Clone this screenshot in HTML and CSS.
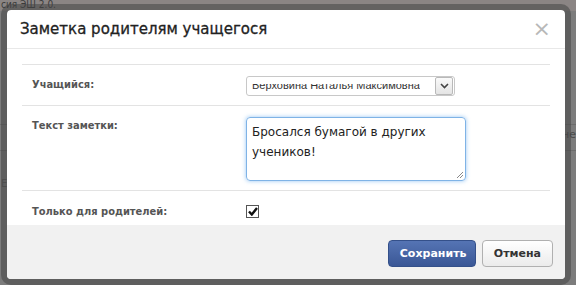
FILE: index.html
```html
<!DOCTYPE html>
<html lang="ru">
  <head>
    <meta charset="UTF-8" />
    <meta name="viewport" content="width=device-width, initial-scale=1.0" />
    <title>Заметка родителям учащегося</title>
    <link rel="stylesheet" href="styles.css">
  </head>
  <body>
    <div class="backdrop">
      <div class="page-top">сия ЭШ 2.0.</div>
      <div class="page-line line-a"></div>
      <div class="page-line line-b"></div>
      <div class="page-side">Е</div>
      <div class="page-side-right">не</div>
    </div>

    <div class="modal">
      <div class="modal-header">
        <h3>Заметка родителям учащегося</h3>
        <span class="close">&times;</span>
      </div>

      <div class="modal-body">
        <div class="form-row">
          <label class="row-label">Учащийся:</label>
          <div class="row-control">
            <div class="select">
              <span class="select-text"><span>Верховина Наталья Максимовна</span></span>
              <span class="select-arrow">
                <svg width="9" height="6" viewBox="0 0 9 6"><path d="M1 1 L4.5 4.5 L8 1" fill="none" stroke="#444" stroke-width="1.6"/></svg>
              </span>
            </div>
          </div>
        </div>

        <div class="form-row">
          <label class="row-label">Текст заметки:</label>
          <div class="row-control">
            <div class="textarea">Бросался бумагой в других учеников!
              <svg class="grip" width="8" height="8" viewBox="0 0 8 8"><path d="M7 1 L1 7 M7 4 L4 7" stroke="#888" stroke-width="1"/></svg>
            </div>
          </div>
        </div>

        <div class="form-row last">
          <label class="row-label">Только для родителей:</label>
          <div class="row-control">
            <span class="checkbox">
              <svg width="10" height="9" viewBox="0 0 10 9"><path d="M1 4.5 L3.8 7.5 L9 1" fill="none" stroke="#111" stroke-width="2.4"/></svg>
            </span>
          </div>
        </div>
      </div>

      <div class="modal-footer">
        <button class="btn btn-primary">Сохранить</button>
        <button class="btn">Отмена</button>
      </div>
    </div>
  </body>
</html>
```

FILE: styles.css
```css
body {
  margin: 0;
  padding: 4px 5px 0 1px;
  background-color: #7c7c7c;
  font-family: "DejaVu Sans", Verdana, sans-serif;
  height: 285px;
  box-sizing: border-box;
  overflow: hidden;
}
.backdrop {
  position: absolute;
  top: 0;
  left: 0;
  width: 576px;
  height: 285px;
  background-color: #7c7c7c;
}
.page-top {
  height: 11px;
  background-color: #8b8584;
  color: #3a3a3a;
  font-family: "DejaVu Sans", sans-serif;
  font-stretch: condensed;
  font-size: 10px;
  line-height: 10px;
  padding-left: 1px;
  overflow: hidden;
}
.page-line {
  position: absolute;
  left: 0;
  width: 576px;
  height: 1px;
  background-color: #6c6c6c;
}
.line-a {
  top: 124px;
}
.line-b {
  top: 150px;
}
.page-side {
  position: absolute;
  left: 1px;
  top: 178px;
  font-size: 10px;
  color: #5a5a5a;
}
.page-side-right {
  position: absolute;
  right: 0;
  top: 128px;
  font-size: 11px;
  color: #4a4a4a;
}
.modal {
  position: relative;
  width: 558px;
  border: 6px solid rgba(70, 70, 70, 0.55);
  border-radius: 10px;
  background-color: #fff;
  background-clip: padding-box;
  overflow: hidden;
}
.modal-header {
  display: flex;
  align-items: center;
  justify-content: space-between;
  height: 38px;
  padding: 0 14px 0 13px;
  border-bottom: 1px solid #e8e8e8;
}
.modal-header h3 {
  margin: 0;
  font-size: 15px;
  font-weight: normal;
  color: #222;
  -webkit-text-stroke: 0.3px #222;
}
.close {
  font-size: 22px;
  color: #b8b8b8;
  line-height: 1;
}
.modal-body {
  padding: 15px 15px 0 15px;
}
.form-row {
  display: flex;
  border-top: 1px solid #e3e3e3;
  padding: 11px 0 9px 0;
}
.form-row.last {
  padding: 12px 0 7px 0;
}
.row-label {
  width: 214px;
  padding-left: 10px;
  font-size: 11px;
  font-weight: bold;
  font-stretch: condensed;
  color: #555;
  padding-top: 2px;
}
.row-control {
  flex: 1;
}
.select {
  display: flex;
  align-items: center;
  justify-content: space-between;
  width: 202px;
  height: 18px;
  border: 1px solid #c8c8c8;
  border-radius: 3px;
  padding-left: 5px;
  overflow: hidden;
}
.select-text {
  display: block;
  align-self: flex-start;
  height: 7px;
  margin-top: 7px;
  overflow: hidden;
  font-family: "Liberation Sans", Arial, sans-serif;
  font-size: 11px;
  color: #333;
  white-space: nowrap;
}
.select-text span {
  display: block;
  line-height: 11px;
  margin-top: -4px;
}
.select-arrow {
  display: flex;
  align-items: center;
  justify-content: center;
  flex-shrink: 0;
  width: 16px;
  height: 16px;
  margin-right: 1px;
  border: 1px solid #b9b9b9;
  border-radius: 2px;
  background: linear-gradient(#fafafa, #e4e4e4);
}
.textarea {
  position: relative;
  width: 208px;
  height: 54px;
  padding: 4px 5px;
  border: 1px solid #7fb3e6;
  border-radius: 4px;
  box-shadow: 0 0 4px rgba(82, 160, 236, 0.6);
  font-size: 12px;
  line-height: 20px;
  color: #222;
}
.grip {
  position: absolute;
  right: 1px;
  bottom: 1px;
}
.checkbox {
  display: flex;
  align-items: center;
  justify-content: center;
  width: 11px;
  height: 11px;
  margin-top: 2px;
  border: 1px solid #555;
  background-color: #fff;
}
.modal-footer {
  display: flex;
  justify-content: flex-end;
  align-items: center;
  gap: 6px;
  height: 54px;
  padding: 0 12px;
  background-color: #f1f1f1;
}
.btn {
  height: 27px;
  padding: 0 11px;
  border: 1px solid #b0b0b0;
  border-radius: 4px;
  background: linear-gradient(#ffffff, #ebebeb);
  font-family: "DejaVu Sans", Verdana, sans-serif;
  font-size: 11px;
  font-weight: bold;
  color: #333;
  cursor: pointer;
  margin-top: 2px;
}
.btn-primary {
  width: 88px;
  border-color: #34508a;
  background: linear-gradient(#5574b4, #3a5796);
  color: #fff;
}
```
